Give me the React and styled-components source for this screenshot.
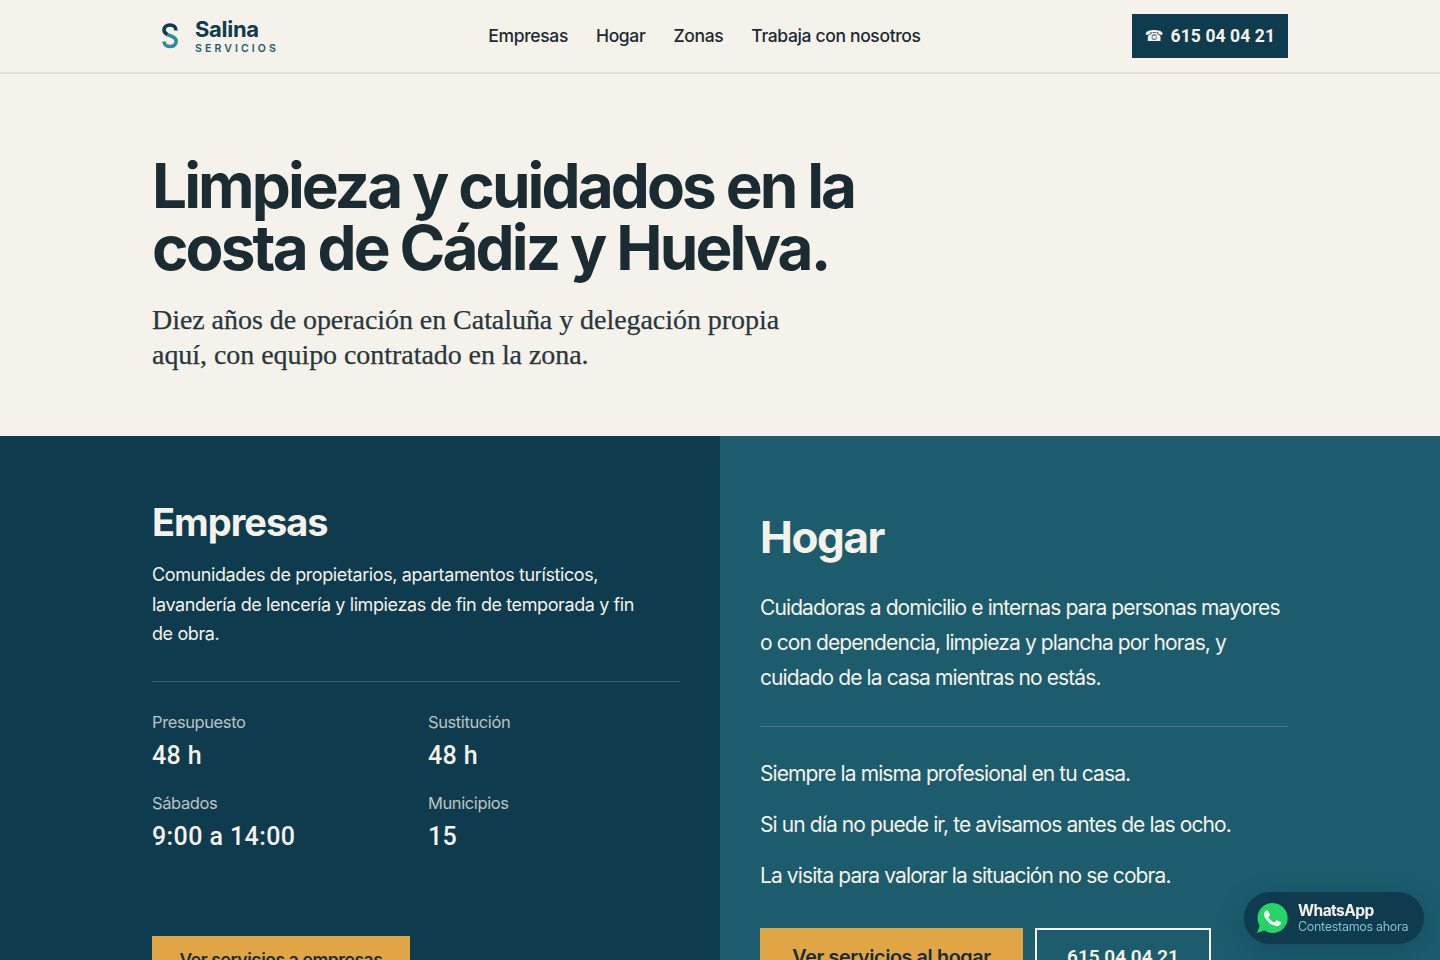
import React from 'react';
import styled, { createGlobalStyle } from 'styled-components';

const sans = `Inter, "Liberation Sans", sans-serif`;
const serif = `"Liberation Serif", serif`;
const digits = `Roboto, "Liberation Sans", sans-serif`;

const GlobalStyle = createGlobalStyle`
    html, body {
        margin: 0;
        padding: 0;
        background: #f5f2eb;
        overflow: hidden;
        height: 960px;
    }
    * { box-sizing: border-box; }
`;

const NAV_LINKS = ['Empresas', 'Hogar', 'Zonas', 'Trabaja con nosotros'];

const STATS = [
    { label: 'Presupuesto', value: '48 h' },
    { label: 'Sustitución', value: '48 h' },
    { label: 'Sábados', value: '9:00 a 14:00' },
    { label: 'Municipios', value: '15' },
];

const HOME_NOTES = [
    'Siempre la misma profesional en tu casa.',
    'Si un día no puede ir, te avisamos antes de las ocho.',
    'La visita para valorar la situación no se cobra.',
];

const LogoMark = () => (
    <LogoSvg width="16" height="26" viewBox="0 0 16 26" fill="none">
        <path d="M14 7.500C14 3.800 11.400 2 8 2 4.400 2 2 4 2 6.800c0 2.400 1.300 3.800 3.600 4.800" stroke="#0e3b4d" strokeWidth="3.600" />
        <path d="M5.600 11.600l4.800 2c2.500 1.100 3.800 2.500 3.800 4.700 0 3.100-2.600 5.200-6.200 5.200-3.500 0-6-1.900-6-5" stroke="#2c8c9b" strokeWidth="3.600" />
    </LogoSvg>
);

const WhatsAppIcon = () => (
    <svg width="32" height="32" viewBox="0 0 32 32">
        <path d="M16.500 1C8 1 1.500 7.700 1.500 16c0 2.800.8 5.500 2.200 7.800L1 31l7.500-2.400A15 15 0 1 0 16.500 1z" fill="#25d366" />
        <path d="M12.300 9.300c-.3-.7-.6-.7-.9-.7h-.8c-.3 0-.7.100-1.100.5-.4.400-1.400 1.400-1.400 3.400s1.500 3.900 1.700 4.200c.2.300 2.900 4.600 7.100 6.300 3.500 1.400 4.200 1.100 5 1 .8-.1 2.400-1 2.700-1.900.3-.9.300-1.800.2-1.900-.1-.200-.4-.3-.8-.5-.4-.2-2.400-1.200-2.800-1.300-.4-.1-.6-.2-.9.200-.3.400-1 1.300-1.300 1.600-.2.300-.5.300-.9.100-.4-.2-1.700-.6-3.300-2-1.200-1.100-2-2.400-2.300-2.800-.2-.4 0-.6.200-.8.200-.2.400-.5.600-.7.200-.2.300-.4.400-.7.100-.3.100-.5 0-.7-.1-.2-.9-2.200-1.300-3z" fill="#fff" />
    </svg>
);

const App = () => (
    <>
        <GlobalStyle />
        <TopBar>
            <Brand href="#">
                <LogoMark />
                <BrandText>
                    <BrandName>Salina</BrandName>
                    <BrandSub>SERVICIOS</BrandSub>
                </BrandText>
            </Brand>
            <Nav>
                {NAV_LINKS.map((link) => (
                    <NavLink key={link} href="#">{link}</NavLink>
                ))}
            </Nav>
            <PhoneButton href="#"><PhoneGlyph>☎</PhoneGlyph>615 04 04 21</PhoneButton>
        </TopBar>

        <Hero>
            <HeroTitle>Limpieza y cuidados en la<br />costa de Cádiz y Huelva.</HeroTitle>
            <HeroLead>Diez años de operación en Cataluña y delegación propia<br />aquí, con equipo contratado en la zona.</HeroLead>
        </Hero>

        <Split>
            <BusinessPanel>
                <BusinessTitle>Empresas</BusinessTitle>
                <BusinessText>
                    Comunidades de propietarios, apartamentos turísticos,<br />
                    lavandería de lencería y limpiezas de fin de temporada y fin<br />
                    de obra.
                </BusinessText>
                <Divider $gap={32} />
                <StatGrid>
                    {STATS.map((stat) => (
                        <div key={stat.label}>
                            <StatLabel>{stat.label}</StatLabel>
                            <StatValue>{stat.value}</StatValue>
                        </div>
                    ))}
                </StatGrid>
                <Actions $top={83}>
                    <PrimaryButton href="#" $width={258} $size={17.5} $pad={8}>Ver servicios a empresas</PrimaryButton>
                </Actions>
            </BusinessPanel>

            <HomePanel>
                <HomeTitle>Hogar</HomeTitle>
                <HomeText>
                    Cuidadoras a domicilio e internas para personas mayores<br />
                    o con dependencia, limpieza y plancha por horas, y<br />
                    cuidado de la casa mientras no estás.
                </HomeText>
                <Divider $gap={31} />
                <NoteList>
                    {HOME_NOTES.map((note) => (
                        <Note key={note}>{note}</Note>
                    ))}
                </NoteList>
                <Actions $top={35}>
                    <PrimaryButton href="#" $width={263} $size={19.8} $pad={13}>Ver servicios al hogar</PrimaryButton>
                    <OutlineButton href="#">615 04 04 21</OutlineButton>
                </Actions>
            </HomePanel>
        </Split>

        <WhatsAppBadge href="#">
            <WhatsAppIcon />
            <BadgeText>
                <BadgeTitle>WhatsApp</BadgeTitle>
                <BadgeSub>Contestamos ahora</BadgeSub>
            </BadgeText>
        </WhatsAppBadge>
    </>
);

const TopBar = styled.header`
    height: 74px;
    padding: 0 152px;
    display: flex;
    justify-content: space-between;
    align-items: center;
    background: #f5f2eb;
    border-bottom: 2px solid #e3e2dc;
`;

const Brand = styled.a`
    width: 125px;
    display: flex;
    align-items: center;
    gap: 17px;
    padding-left: 10px;
    text-decoration: none;
`;

const LogoSvg = styled.svg`
    flex: none;
`;

const BrandText = styled.span`
    display: flex;
    flex-direction: column;
    flex: none;
`;

const BrandName = styled.span`
    font: 700 22px/22px ${sans};
    letter-spacing: -0.3px;
    color: #0e3b4d;
`;

const BrandSub = styled.span`
    margin-top: 2px;
    font: 600 10.500px/13px ${sans};
    letter-spacing: 3.100px;
    color: #1c5c6c;
`;

const Nav = styled.nav`
    display: flex;
    gap: 28px;
`;

const NavLink = styled.a`
    font: 500 17.500px/24px ${sans};
    letter-spacing: -0.35px;
    color: #1c2a30;
    text-decoration: none;
`;

const PhoneButton = styled.a`
    width: 156px;
    height: 44px;
    display: flex;
    align-items: center;
    justify-content: center;
    background: #0e3b4d;
    color: #f5f2eb;
    font: 700 17.500px/24px ${digits};
    letter-spacing: 0.1px;
    white-space: nowrap;
    text-decoration: none;
`;

const PhoneGlyph = styled.span`
    margin-right: 7px;
    font: 400 15px/24px "DejaVu Sans", sans-serif;
    letter-spacing: 0;
`;

const Hero = styled.section`
    height: 362px;
    padding: 81px 152px 0;
    background: #f5f2eb;
`;

const HeroTitle = styled.h1`
    margin: 0;
    font: 700 62px/62px ${sans};
    letter-spacing: -2.900px;
    color: #1b2b32;
`;

const HeroLead = styled.p`
    margin: 23px 0 0;
    font: 400 28px/35px ${serif};
    letter-spacing: -0.05px;
    color: #2a363b;
    -webkit-text-stroke: 0.25px #2a363b;
`;

const Split = styled.div`
    display: grid;
    grid-template-columns: 720px 720px;
    height: 524px;
    overflow: hidden;
`;

const BusinessPanel = styled.section`
    padding: 62px 40px 0 152px;
    background: #0e3b4d;
    color: #f5f2eb;
`;

const HomePanel = styled.section`
    padding: 73px 152px 0 40px;
    background: #1c5c6c;
    color: #f5f2eb;
`;

const BusinessTitle = styled.h2`
    margin: 0;
    font: 700 38px/48px ${sans};
    letter-spacing: -1px;
`;

const HomeTitle = styled.h2`
    margin: 0;
    font: 700 44px/56px ${sans};
    letter-spacing: -1.400px;
`;

const BusinessText = styled.p`
    margin: 14px 0 0;
    font: 400 18px/29.500px ${sans};
    letter-spacing: -0.4px;
    white-space: nowrap;
`;

const HomeText = styled.p`
    margin: 25px 0 0;
    font: 400 21px/35px ${sans};
    letter-spacing: -0.9px;
    white-space: nowrap;
`;

const Divider = styled.hr`
    margin: ${(props) => props.$gap}px 0 0;
    border: 0;
    border-top: 1px solid rgba(245, 242, 235, 0.2);
`;

const StatGrid = styled.div`
    margin-top: 28px;
    display: grid;
    grid-template-columns: 276px 1fr;
    row-gap: 19px;
`;

const StatLabel = styled.div`
    font: 400 16.500px/24px ${sans};
    letter-spacing: -0.4px;
    color: rgba(245, 242, 235, 0.75);
`;

const StatValue = styled.div`
    margin-top: 6px;
    font: 500 25px/32px ${digits};
    letter-spacing: 0.4px;
`;

const NoteList = styled.div`
    margin-top: 29px;
    display: flex;
    flex-direction: column;
    gap: 16px;
`;

const Note = styled.p`
    margin: 0;
    font: 400 21px/35px ${sans};
    letter-spacing: -0.9px;
`;

const Actions = styled.div`
    margin-top: ${(props) => props.$top}px;
    display: flex;
    gap: 12px;
`;

const PrimaryButton = styled.a`
    width: ${(props) => props.$width}px;
    height: 64px;
    padding-top: ${(props) => props.$pad}px;
    display: block;
    text-align: center;
    background: #e0a545;
    color: #1b2b32;
    font: 600 ${(props) => props.$size}px/32px ${sans};
    letter-spacing: -0.4px;
    text-decoration: none;
`;

const OutlineButton = styled.a`
    width: 176px;
    height: 64px;
    padding-top: 11px;
    display: block;
    text-align: center;
    border: 2px solid #f5f2eb;
    color: #f5f2eb;
    font: 600 19px/32px ${digits};
    text-decoration: none;
`;

const WhatsAppBadge = styled.a`
    position: fixed;
    right: 16px;
    bottom: 16px;
    width: 180px;
    height: 52px;
    padding-left: 12px;
    display: flex;
    align-items: center;
    gap: 10px;
    border-radius: 26px;
    background: #0e3b4d;
    box-shadow: 0 8px 24px rgba(15, 58, 77, 0.35);
    text-decoration: none;
`;

const BadgeText = styled.span`
    display: flex;
    flex-direction: column;
`;

const BadgeTitle = styled.span`
    font: 700 15.500px/17px ${sans};
    letter-spacing: -0.55px;
    color: #f5f2eb;
`;

const BadgeSub = styled.span`
    font: 400 12.500px/15px ${sans};
    letter-spacing: -0.3px;
    color: #7fc1c9;
`;

export default App;
